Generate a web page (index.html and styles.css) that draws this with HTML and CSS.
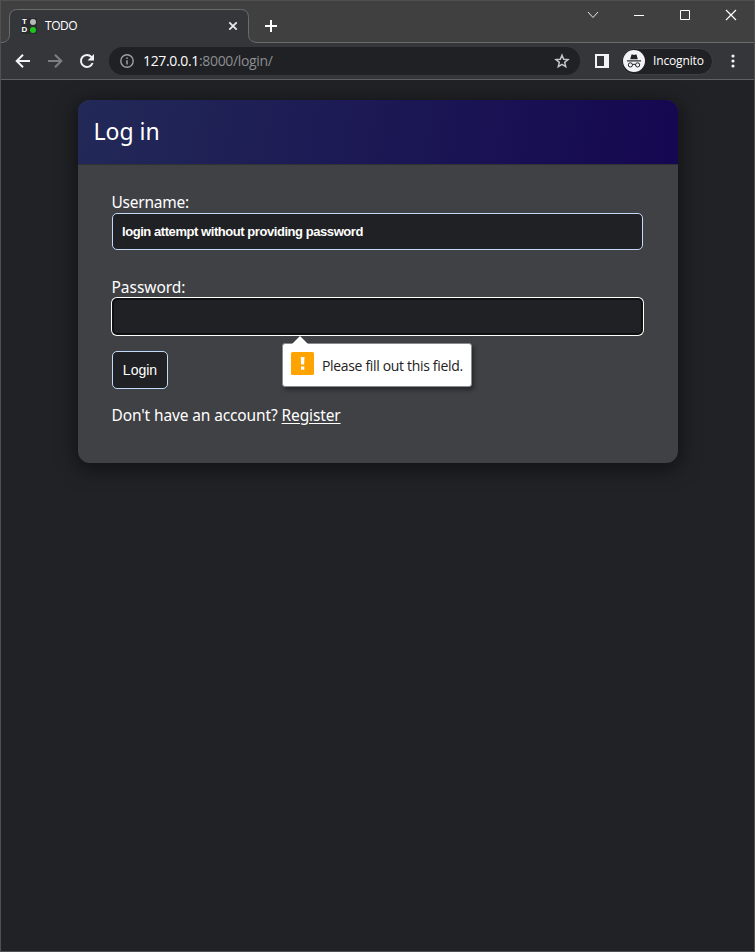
FILE: index.html
```html
<!DOCTYPE html>
<html lang="en">
<head>
<meta charset="utf-8">
<title>TODO</title>
<link rel="stylesheet" href="styles.css">
</head>
<body>
<div class="window">
  <header class="titlebar">
    <div class="tab">
      <svg class="tab-shape" width="257" height="34" viewBox="0 0 257 34"><path d="M0 33.5C5 33.5 8.500 31 8.500 25.500V8.500Q8.500 .5 16.500 .5H239.500Q247.500 .5 247.500 8.500V25.500C247.500 31 251 33.500 257 33.500V34H0Z" fill="#35363a"/><path d="M0 33.500C5 33.500 8.500 31 8.500 25.500V8.500Q8.500 .5 16.500 .5H239.500Q247.500 .5 247.500 8.500V25.500C247.500 31 251 33.500 257 33.500" fill="none" stroke="#6b6c6e"/></svg>
      <span class="favicon"><b>T</b><i></i><b>D</b><i class="on"></i></span>
      <span class="tab-title">TODO</span>
      <svg class="tab-close" width="10" height="10" viewBox="0 0 10 10"><path d="M1.300 1.300l7.400 7.400M8.700 1.300l-7.400 7.400" stroke="#e8eaed" stroke-width="1.800"/></svg>
    </div>
    <svg class="new-tab" width="14" height="14" viewBox="0 0 14 14"><path d="M7 1v12M1 7h12" stroke="#fff" stroke-width="2"/></svg>
    <div class="controls">
      <svg width="46" height="30" viewBox="0 0 46 30"><path d="M18 11l5 5.500L28 11" fill="none" stroke="#e8e8e8"/></svg>
      <svg width="46" height="30" viewBox="0 0 46 30"><path d="M18 14.500h10" stroke="#fff"/></svg>
      <svg width="46" height="30" viewBox="0 0 46 30"><path d="M18.500 9.500h9v9h-9z" fill="none" stroke="#fff"/></svg>
      <svg width="46" height="30" viewBox="0 0 46 30"><path d="M18 9l10 10M28 9L18 19" stroke="#fff" stroke-width="1.200"/></svg>
    </div>
  </header>
  <nav class="toolbar">
    <svg class="nav-icon" width="16" height="16" viewBox="0 0 16 16"><path d="M15 8H2.500M8 1.700L1.700 8 8 14.300" fill="none" stroke="#f1f3f4" stroke-width="2"/></svg>
    <svg class="nav-icon" width="16" height="16" viewBox="0 0 16 16"><path d="M1 8h12.500M8 1.700L14.300 8 8 14.300" fill="none" stroke="#7d7e81" stroke-width="2"/></svg>
    <svg class="nav-icon" width="16" height="16" viewBox="0 0 16 16"><path d="M13.600 10A6 6 0 1 1 12.400 3.900L13.800 5.200" fill="none" stroke="#f1f3f4" stroke-width="2"/><path d="M15 1v6.500H8.500z" fill="#f1f3f4"/></svg>
    <div class="omnibox">
      <svg width="14" height="14" viewBox="0 0 14 14"><circle cx="7" cy="7" r="6.200" fill="none" stroke="#9aa0a6" stroke-width="1.400"/><path d="M7 6.200V10.500M7 3.400V5" stroke="#9aa0a6" stroke-width="1.500"/></svg>
      <span class="url"><b>127.0.0.1</b>:8000/login/</span>
      <svg class="star" width="16" height="16" viewBox="0 0 16 16"><path d="M8 2.200L9.700 6.200 14 6.600 10.700 9.400 11.700 13.700 8 11.400 4.300 13.700 5.300 9.400 2 6.600 6.300 6.200Z" fill="none" stroke="#c4c6ca" stroke-width="1.500"/></svg>
    </div>
    <svg class="panel-icon" width="14" height="14" viewBox="0 0 14 14"><path fill-rule="evenodd" d="M0 0h14v14H0zM2 2v10h7V2z" fill="#f1f3f4"/></svg>
    <div class="incognito">
      <svg width="22" height="22" viewBox="0 0 22 22"><circle cx="11" cy="11" r="11" fill="#f1f3f4"/><path d="M7.200 9.300L8.500 4.600l1.100-.2 1.400.5 1.400-.5 1.100.2 1.300 4.700z" fill="#202124"/><path d="M4 10.900h14" stroke="#202124" stroke-width="1.200"/><g fill="none" stroke="#202124"><circle cx="7.400" cy="14.900" r="2.100"/><circle cx="14.600" cy="14.900" r="2.100"/><path d="M9.500 14.600Q11 13.800 12.500 14.600"/></g></svg>
      <span>Incognito</span>
    </div>
    <svg class="menu-icon" width="4" height="14" viewBox="0 0 4 14"><g fill="#f1f3f4"><circle cx="2" cy="2" r="1.600"/><circle cx="2" cy="7" r="1.600"/><circle cx="2" cy="12" r="1.600"/></g></svg>
  </nav>
  <main class="page">
    <section class="card">
      <h1 class="card-header"><span class="heading">Log in</span></h1>
      <form class="card-body">
        <label class="label username-label" for="username">Username:</label>
        <input class="field" id="username" type="text" value="login attempt without providing password">
        <label class="label password-label" for="password">Password:</label>
        <div class="password-wrap">
          <input class="field focused" id="password" type="password">
          <div class="bubble">
            <svg class="arrow" width="18" height="9" viewBox="0 0 18 9"><path d="M0 9L9 0l9 9z" fill="#fff"/></svg>
            <svg width="23" height="23" viewBox="0 0 23 23"><rect width="23" height="23" rx="1.500" fill="#ffa300"/><path d="M9.700 5h3.800l-.4 7.500h-3zM10 14.500h3.300v3.300H10z" fill="#fff"/></svg>
            <span>Please fill out this field.</span>
          </div>
        </div>
        <button class="login" type="button">Login</button>
        <p class="signup"><span class="question">Don't have an account?</span><a class="register" href="#">Register</a></p>
      </form>
    </section>
  </main>
</div>
</body>
</html>
```
FILE: styles.css
```css
* { box-sizing: border-box; }
body { margin: 0; background: #212226; color: #fff; overflow: hidden; }
svg { display: block; flex: none; }
.window { height: 952px; border: 1px solid #505050; display: flex; flex-direction: column; }

.titlebar { height: 42px; flex: none; background: #404040; border-bottom: 1px solid #6b6c6e; display: flex; align-items: flex-start; }
.tab { position: relative; width: 257px; height: 34px; margin-top: 8px; padding: 0 15px 0 20px; flex: none; display: flex; align-items: center; }
.tab-shape { position: absolute; left: 0; top: 0; }
.favicon { position: relative; width: 16px; height: 16px; display: grid; grid-template-columns: 7px 9px; grid-template-rows: 8px 7px; align-items: center; justify-items: center; background: #2b2c2f; }
.favicon b { font: bold 8px/8px "Liberation Sans", sans-serif; }
.favicon i { width: 6px; height: 6px; border-radius: 50%; background: #b8b8b8; }
.favicon .on { background: #1fc41f; }
.tab-title { position: relative; margin-left: 8px; font: 12px/16px "Open Sans", sans-serif; letter-spacing: -.45px; }
.tab-close { position: relative; margin-left: auto; margin-right: 5px; }
.new-tab { margin: 18px 0 0 6px; }
.controls { display: flex; margin-left: auto; }

.toolbar { height: 37px; flex: none; background: #35363a; border-bottom: 1px solid #606163; display: flex; align-items: center; padding-left: 14px; }
.nav-icon { margin-right: 16px; }
.omnibox { width: 471px; height: 28px; margin-left: -2px; padding: 0 10px 0 11px; border-radius: 14px; background: #202124; display: flex; align-items: center; }
.url { margin-left: 9px; font: 14px/20px "Open Sans", sans-serif; letter-spacing: -.34px; color: #8b8e92; }
.url b { font-weight: 400; color: #fff; }
.star { margin-left: auto; }
.panel-icon { margin-left: 15px; }
.incognito { width: 92px; height: 27px; margin-left: 12px; padding-left: 1px; border: 1px solid #3f4043; border-radius: 14px; background: #202124; display: flex; align-items: center; font: 12px/16px "Open Sans", sans-serif; letter-spacing: -.15px; }
.incognito span { margin-left: 8px; }
.menu-icon { margin-left: 18px; }

.page { flex: 1; padding: 20px 0 0 77px; }
.card { width: 600px; height: 363px; border-radius: 12px; background: #404145; box-shadow: 0 4px 20px 2px rgba(0,0,0,.5); font-family: "Noto Sans", sans-serif; }
.card-header { height: 65px; margin: 0; padding: 0 16px 2px; display: flex; align-items: center; border-bottom: 1px solid #303134; border-radius: 12px 12px 0 0; background: linear-gradient(100deg, #222957, #150751); font-size: 23px; font-weight: 400; }
.heading { margin-left: -.5px; }
.card-body { display: flex; flex-direction: column; align-items: flex-start; padding: 25px 35px 0 34px; }
.label { margin-left: -.5px; padding-top: 1px; font-size: 15.5px; line-height: 22px; letter-spacing: -.25px; }
.field { display: block; width: 531px; height: 37px; margin: 0; padding: 0 9px; border: 1px solid #c3dafa; border-radius: 5px; outline: 0; background: #202124; color: #fff; font: bold 13px "Liberation Sans", sans-serif; letter-spacing: -.44px; }
.password-label { margin-top: 25px; letter-spacing: -.03px; }
.password-wrap { position: relative; }
.focused { border: 2px solid #101010; box-shadow: 0 0 0 1px #fff; }
.bubble { position: absolute; left: 170px; top: 45px; width: 190px; height: 44px; padding: 0 0 3px 8px; border: 1px solid #8b8b8d; border-radius: 3px; background: #fff; box-shadow: 2px 3px 4px rgba(0,0,0,.4); color: #222; display: flex; align-items: center; font: 14px/20px "Open Sans", sans-serif; letter-spacing: -.33px; white-space: nowrap; }
.bubble span { margin: 4px 0 0 8px; }
.arrow { position: absolute; left: 8px; top: -8px; }
.login { width: 56px; height: 38px; margin: 16px 0 0; padding: 0; border: 1px solid #c3dafa; border-radius: 5px; background: #202124; color: #fff; font: 14px "Liberation Sans", sans-serif; }
.signup { margin: 14px 0 0 -.5px; font-size: 15.5px; line-height: 24px; letter-spacing: -.13px; white-space: nowrap; display: flex; gap: 4px; }
.register { color: #fff; text-underline-offset: 2px; }
```
